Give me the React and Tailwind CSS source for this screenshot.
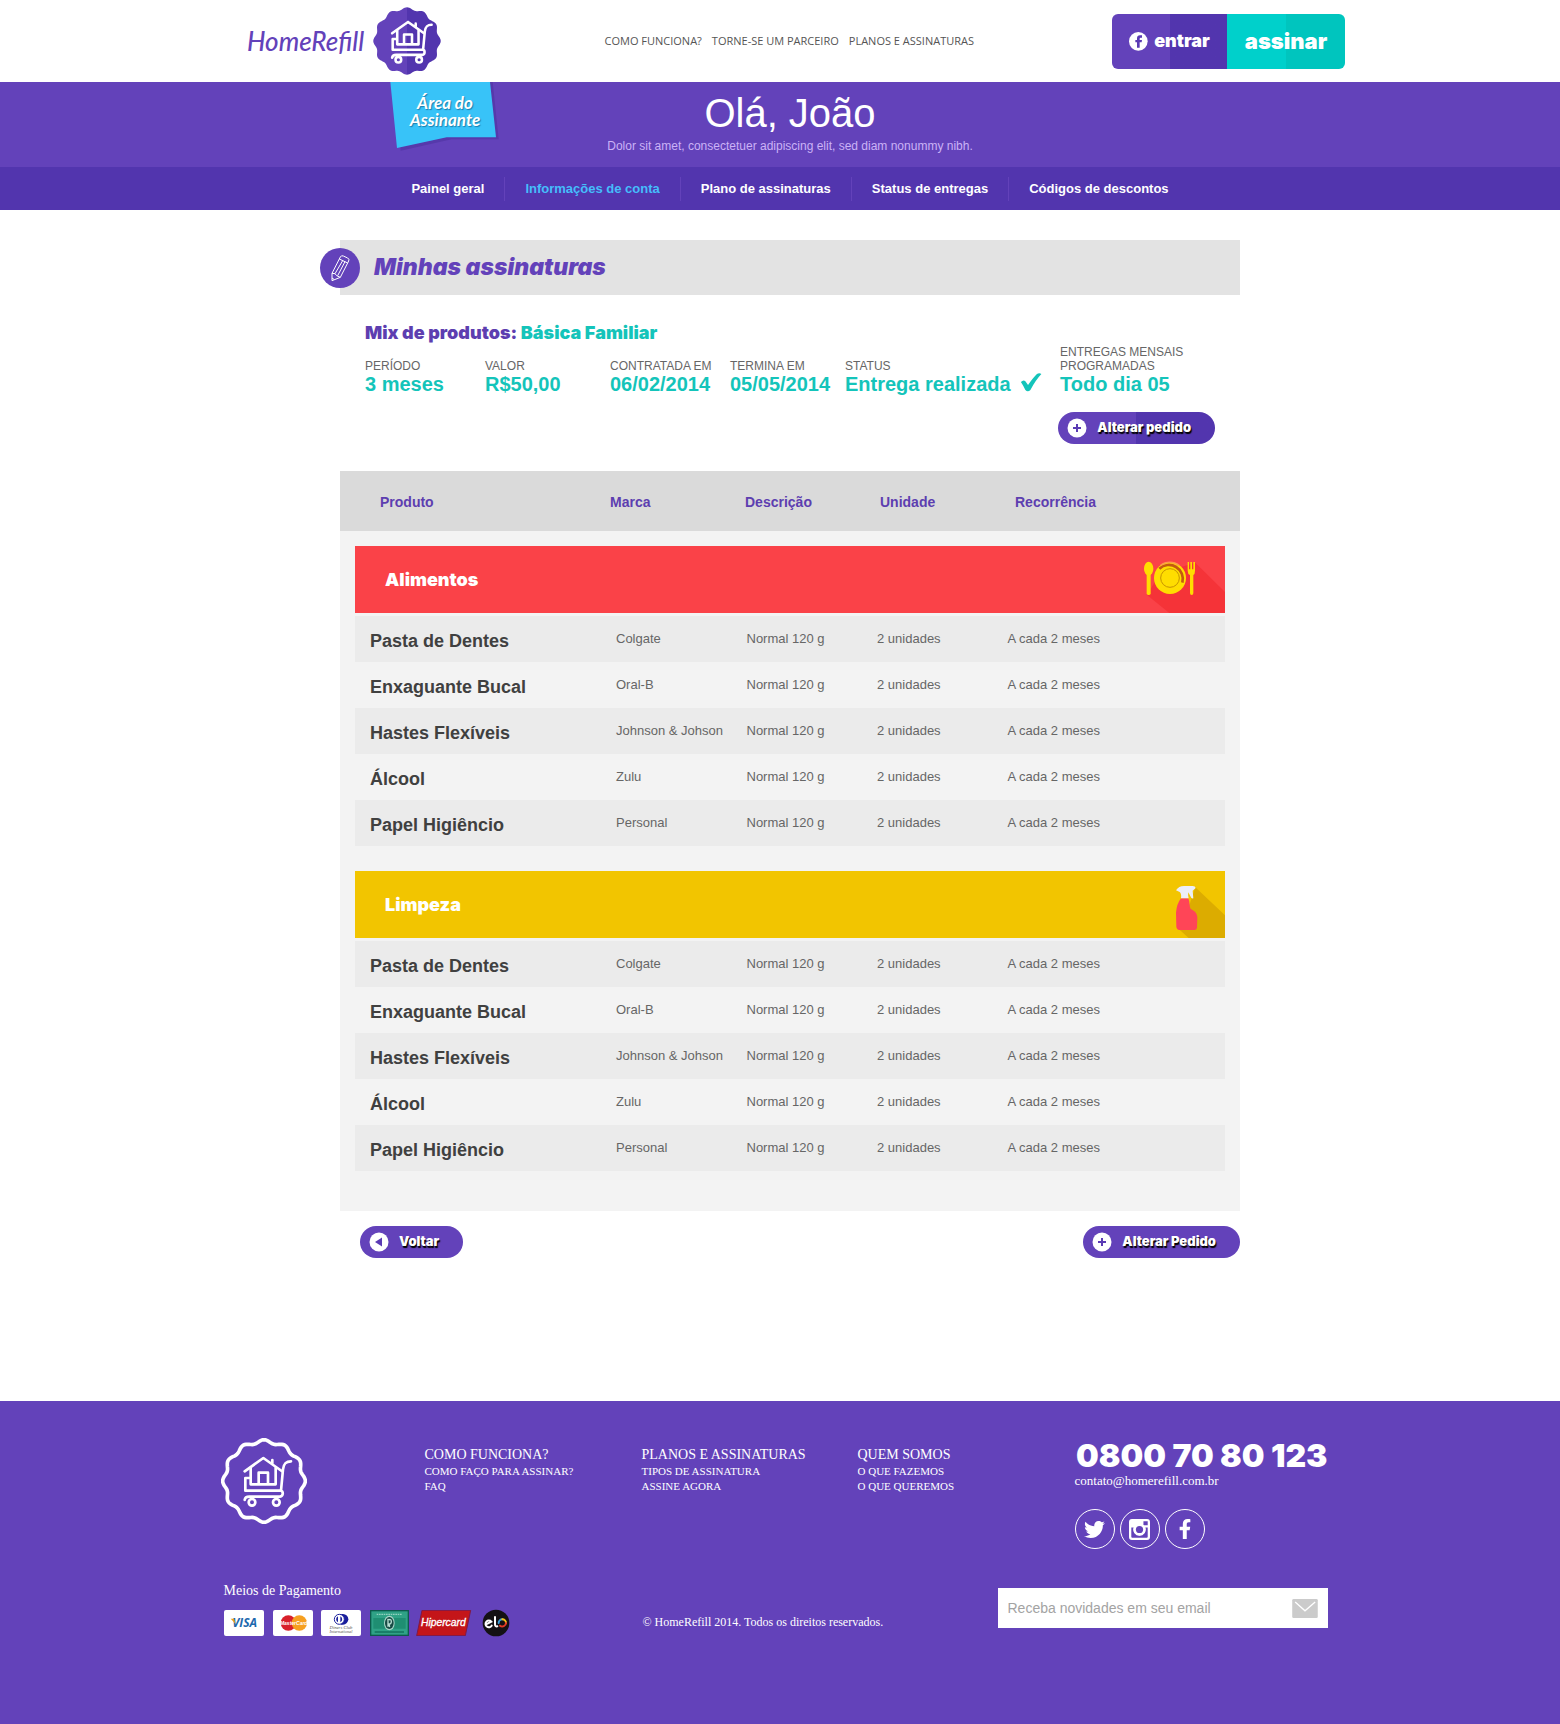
import React from "react";
import { FaTwitter, FaFacebookF } from "react-icons/fa";

const black = "font-['Inter','Liberation_Sans',sans-serif] font-black";

const topLinks = ["COMO FUNCIONA?", "TORNE-SE UM PARCEIRO", "PLANOS E ASSINATURAS"];

const accountLinks = [
  "Painel geral",
  "Informações de conta",
  "Plano de assinaturas",
  "Status de entregas",
  "Códigos de descontos",
];

const details = [
  { label: "PERÍODO", value: "3 meses" },
  { label: "VALOR", value: "R$50,00" },
  { label: "CONTRATADA EM", value: "06/02/2014" },
  { label: "TERMINA EM", value: "05/05/2014" },
  { label: "STATUS", value: "Entrega realizada", done: true },
  { label: "ENTREGAS MENSAIS PROGRAMADAS", value: "Todo dia 05" },
];

const products = [
  ["Pasta de Dentes", "Colgate"],
  ["Enxaguante Bucal", "Oral-B"],
  ["Hastes Flexíveis", "Johnson & Johson"],
  ["Álcool", "Zulu"],
  ["Papel Higiêncio", "Personal"],
];

const footerColumns = [
  { title: "COMO FUNCIONA?", links: ["COMO FAÇO PARA ASSINAR?", "FAQ"] },
  { title: "PLANOS E ASSINATURAS", links: ["TIPOS DE ASSINATURA", "ASSINE AGORA"] },
  { title: "QUEM SOMOS", links: ["O QUE FAZEMOS", "O QUE QUEREMOS"] },
];

function scallop(radius, depth) {
  const points = [];
  for (let i = 0; i < 180; i += 1) {
    const t = (i / 180) * Math.PI * 2;
    const r = radius + depth * Math.cos(12 * t);
    points.push(`${(Math.sin(t) * r).toFixed(1)} ${(-Math.cos(t) * r).toFixed(1)}`);
  }
  return `M${points.join("L")}Z`;
}

function HouseCart({ strokeWidth }) {
  return (
    <g
      transform="translate(-162 -183)"
      fill="none"
      stroke="#fff"
      strokeWidth={strokeWidth}
      strokeLinecap="round"
      strokeLinejoin="round"
    >
      <path d="M104 154 160 114 215 153M187 120v12" />
      <path d="M122 144v49h75v-49M146 193v-35h28v35" />
      <path d="M118 174h-12v38h107M243 124c-17 0-22 8-24 24l-6 64c7 2 8 16-3 18h-92c-8 0-13 3-14 10" />
      <circle cx="126" cy="247" r="10" />
      <circle cx="199" cy="247" r="10" />
    </g>
  );
}

function HeaderBadge() {
  return (
    <svg viewBox="-128 -128 256 256" className="size-[68px]" aria-hidden="true">
      <defs>
        <linearGradient id="badge" x1="0" x2="1" y1="0" y2="0">
          <stop offset="50%" stopColor="#6342ba" />
          <stop offset="50%" stopColor="#5235ae" />
        </linearGradient>
      </defs>
      <path d={scallop(122, 5)} fill="url(#badge)" />
      <g transform="translate(6 2) scale(1.07)">
        <HouseCart strokeWidth="9" />
      </g>
    </svg>
  );
}

function FooterBadge() {
  return (
    <svg viewBox="-129 -129 258 258" className="size-[86px]" aria-hidden="true">
      <path d={scallop(119, 5)} fill="none" stroke="#fff" strokeWidth="11" />
      <HouseCart strokeWidth="8" />
    </svg>
  );
}

function Ribbon() {
  return (
    <div className="absolute top-0 left-[50px] h-[70px] w-[110px]">
      <svg viewBox="0 0 330 210" className="h-full w-full" aria-hidden="true">
        <path d="M10 0H308L326 172H185L32 206Z" fill="#4a2f9c" opacity=".5" />
        <path d="M1 0H300L318 166H170L21 198Z" fill="#38c3f8" />
      </svg>
      <div className="absolute inset-x-0 top-3 text-center font-['Lato','Liberation_Sans',sans-serif] text-[17px] leading-[17px] font-bold text-white italic [text-shadow:1px_1px_1px_#1b7fae]">
        Área do
        <br />
        Assinante
      </div>
    </div>
  );
}

function PencilIcon() {
  return (
    <svg viewBox="30 51 120 120" className="size-10 shrink-0" aria-hidden="true">
      <circle cx="90" cy="111" r="60" fill="#6342ba" />
      <g fill="none" stroke="#fff" strokeWidth="3" strokeLinejoin="round">
        <path d="M66 127 91 78q3-6 9-3l13 6q6 3 3 9L91 139 66 149Z" />
        <path d="M88 84l25 12M66 127l9 1 5 6 11 5M75 128 98 89M83 134l22-42M66 141l6 4" />
      </g>
    </svg>
  );
}

function FoodIcon() {
  return (
    <svg viewBox="414 48 261 201" className="h-[67px] w-[87px]" aria-hidden="true">
      <path d="M586 98 675 186V249H508L441 195 480 130Z" fill="#f53338" />
      <g fill="#fd0">
        <ellipse cx="446" cy="116" rx="14" ry="21" />
        <rect x="440" y="128" width="12" height="67" rx="5" />
        <circle cx="510" cy="144" r="48" />
        <path d="M563 96h4v22h4V96h5v22h4V96h5v26q0 10-5 13v54q0 6-5 6t-5-6v-54q-7-3-7-13Z" />
      </g>
      <path d="M478 116a42 42 0 0 1 69 42" fill="none" stroke="#c45a10" strokeWidth="8" />
      <path d="M482 106a46 46 0 0 1 55 0" fill="none" stroke="#fb9a4a" strokeWidth="5" />
      <circle cx="510" cy="144" r="28" fill="none" stroke="#c79200" strokeWidth="3" />
    </svg>
  );
}

function SprayIcon() {
  return (
    <svg viewBox="339 33 156 201" className="h-[67px] w-[52px]" aria-hidden="true">
      <path d="M406 82 495 166V234H386L352 203 390 130Z" fill="#dcac00" />
      <path d="M363 115h22c5 12 2 22 7 32 13 6 20 14 20 26l-1 30q-1 7-8 7h-45q-8-1-9-10l-1-42q2-26 15-43Z" fill="#ff4557" />
      <path d="M348 91q8-13 24-13h26q8 0 9 6l-9 8 2 23q-6 2-8-5l-7-13q-2 8 1 18h-23q2-14-4-19Z" fill="#eceef8" />
    </svg>
  );
}

function FacebookDisc() {
  return (
    <svg viewBox="0 0 57 57" className="size-[19px] shrink-0" aria-hidden="true">
      <circle cx="28" cy="28" r="28" fill="#fff" />
      <path d="M24 47V31h-5v-7h5v-5q0-9 9-9h6v7h-4q-3 0-3 3v4h7l-1 7h-6v16Z" fill="#5a3ab4" />
    </svg>
  );
}

function CircleIcon({ kind }) {
  return (
    <svg viewBox="0 0 20 20" className="size-5 shrink-0" aria-hidden="true">
      <circle cx="10" cy="10" r="9.5" fill="#fff" />
      {kind === "plus" ? (
        <path d="M10 6v8M6 10h8" stroke="#5a3ab4" strokeWidth="2" />
      ) : (
        <path d="M13 5.5v9L6 10Z" fill="#5a3ab4" />
      )}
    </svg>
  );
}

function PillButton({ kind = "plus", split, children }) {
  return (
    <button
      type="button"
      className={`flex h-8 items-center gap-2.5 rounded-full pr-6 pl-[9px] text-[13px] whitespace-nowrap text-white [text-shadow:1px_2px_1px_#000] ${black} ${
        split ? "bg-linear-to-r from-[#6342ba] from-50% to-[#5235ae] to-50%" : "bg-[#6342ba]"
      }`}
    >
      <CircleIcon kind={kind} />
      {children}
    </button>
  );
}

function Category({ title, color, icon }) {
  return (
    <section>
      <header className={`mb-[3px] flex items-center justify-between pl-[30px] ${color}`}>
        <h3 className={`text-lg text-white ${black}`}>{title}</h3>
        {icon}
      </header>
      <table className="w-full table-fixed text-left text-[13px] text-[#666]">
        <colgroup>
          <col className="w-[30%]" />
          <col className="w-[15%]" />
          <col className="w-[15%]" />
          <col className="w-[15%]" />
          <col className="w-[25%]" />
        </colgroup>
        <tbody>
          {products.map(([name, brand]) => (
            <tr key={name} className="h-[46px] whitespace-nowrap odd:bg-[#ebebeb]">
              <th scope="row" className="pt-1 pl-[15px] text-lg font-bold text-[#404040]">
                {name}
              </th>
              <td>{brand}</td>
              <td>Normal 120 g</td>
              <td>2 unidades</td>
              <td>A cada 2 meses</td>
            </tr>
          ))}
        </tbody>
      </table>
    </section>
  );
}

function PaymentCards() {
  return (
    <div className="mt-[9px] flex items-center">
      <svg viewBox="0 0 120 78" className="h-[26px] w-10" role="img" aria-label="Visa">
        <rect width="120" height="78" rx="6" fill="#fff" />
        <text x="62" y="52" textAnchor="middle" fontFamily="Open Sans" fontWeight="700" fontStyle="italic" fontSize="36" fill="#1d68ad">VISA</text>
        <path d="M20 26h10l5 16Z" fill="#eba21a" />
      </svg>
      <svg viewBox="0 0 120 78" className="ml-[9px] h-[26px] w-10" role="img" aria-label="MasterCard">
        <rect width="120" height="78" rx="6" fill="#fff" />
        <circle cx="46" cy="39" r="23" fill="#d8202a" />
        <circle cx="79" cy="39" r="23" fill="#f6a020" />
        <text x="62" y="45" textAnchor="middle" fontFamily="Liberation Sans" fontWeight="700" fontStyle="italic" fontSize="15" fill="#fff">MasterCard</text>
      </svg>
      <svg viewBox="0 0 120 78" className="ml-2 h-[26px] w-10" role="img" aria-label="Diners Club International">
        <rect width="120" height="78" rx="6" fill="#fff" />
        <path d="M60 12h6a16 16 0 0 1 0 32H60Z" fill="#1a1f9c" />
        <circle cx="55" cy="28" r="15" fill="#fff" stroke="#1a1f9c" strokeWidth="3" />
        <path d="M51 19a10 10 0 0 0 0 18ZM58 19a10 10 0 0 1 0 18Z" fill="#1a1f9c" />
        <text x="60" y="57" textAnchor="middle" fontFamily="Liberation Serif" fontStyle="italic" fontSize="14" fill="#555">Diners Club</text>
        <text x="60" y="69" textAnchor="middle" fontFamily="Liberation Serif" fontStyle="italic" fontSize="13" fill="#555">International</text>
      </svg>
      <svg viewBox="0 0 117 78" className="ml-[9px] h-[26px] w-[39px]" role="img" aria-label="American Express">
        <rect width="117" height="78" fill="#0c5b4c" />
        <rect x="4" y="4" width="109" height="70" fill="#2fa286" />
        <path d="M20 13h76" stroke="#8fd0bd" strokeWidth="4" strokeDasharray="5 2" />
        <path d="M10 24h97v32H10Z" fill="#1f8e72" />
        <ellipse cx="58" cy="39" rx="16" ry="22" fill="#a9d5c8" />
        <ellipse cx="58" cy="39" rx="13" ry="18" fill="#174a44" />
        <path d="M52 31q12-6 12 3t-7 8l2 9M54 26v24" stroke="#b9dfd3" strokeWidth="4" fill="none" />
        <path d="M14 66h88" stroke="#0f6d59" strokeWidth="4" />
      </svg>
      <svg viewBox="0 0 168 78" className="ml-[7px] h-[26px] w-14" role="img" aria-label="Hipercard">
        <path d="M18 1H164L148 77H2Z" fill="#c41519" stroke="#7e1a48" strokeWidth="3" />
        <text x="82" y="49" textAnchor="middle" fontFamily="Liberation Sans" fontStyle="italic" fontSize="31" fill="#fff" stroke="#fff">Hipercard</text>
      </svg>
      <svg viewBox="0 0 84 84" className="ml-2.5 size-7" role="img" aria-label="Elo">
        <circle cx="42" cy="42" r="40" fill="#141114" />
        <g fill="none" strokeWidth="6" strokeLinecap="round">
          <path d="M12 46 28 38A10 10 0 1 0 29 50M39 24V46q0 7 7 6" stroke="#fff" />
          <path d="M50 42a11 11 0 0 1 11-11" stroke="#3aa0dc" />
          <path d="M61 31a11 11 0 0 1 11 11" stroke="#f5c518" />
          <path d="M72 42a11 11 0 0 1-18 8" stroke="#e23a25" />
        </g>
      </svg>
    </div>
  );
}

function InstagramIcon() {
  return (
    <svg viewBox="0 0 64 64" className="size-[21px]" aria-hidden="true">
      <path
        fill="#fff"
        fillRule="evenodd"
        d="M9 0h46q9 0 9 9v46q0 9-9 9H9q-9 0-9-9V9Q0 0 9 0ZM44 7v12h13V7ZM7 26v28q0 3 3 3h44q3 0 3-3V26h-7a19 19 0 1 1-36 0Z"
      />
      <circle cx="32" cy="32" r="15" fill="none" stroke="#fff" strokeWidth="6" />
      <circle cx="32" cy="32" r="11" fill="#6342ba" />
    </svg>
  );
}

export default function App() {
  return (
    <div className="bg-white font-['Liberation_Sans',Arial,sans-serif]">
      <header className="pl-8">
        <div className="mx-auto flex h-[82px] max-w-[1098px] items-center">
          <a href="#" className="flex items-center gap-[9px]">
            <span className="w-[117px] font-['Lato','Liberation_Sans',sans-serif] text-[26px] leading-8 font-medium text-[#6342ba] italic">
              HomeRefill
            </span>
            <HeaderBadge />
          </a>
          <nav className="mr-[138px] ml-auto flex gap-2.5 font-['Open_Sans','Liberation_Sans',sans-serif] text-[11px] whitespace-nowrap text-[#555]">
            {topLinks.map((text) => (
              <a key={text} href="#">
                {text}
              </a>
            ))}
          </nav>
          <div className={`flex h-[55px] overflow-hidden rounded-md text-white ${black}`}>
            <button
              type="button"
              className="flex w-[115px] items-center justify-center gap-1.5 bg-linear-to-r from-[#6342ba] from-50% to-[#5235ae] to-50% text-lg"
            >
              <FacebookDisc />
              entrar
            </button>
            <button
              type="button"
              className="w-[118px] bg-linear-to-r from-[#00d0cb] from-50% to-[#00c5be] to-50% text-[22px]"
            >
              assinar
            </button>
          </div>
        </div>
      </header>

      <div className="bg-[#6342ba] pl-5">
        <div className="relative mx-auto h-[85px] max-w-[900px] pt-2 text-center">
          <Ribbon />
          <h1 className="text-[40px] leading-[46px] text-white">Olá, João</h1>
          <p className="mt-0.5 text-[12px] leading-4 text-[#cbb2f7]">
            Dolor sit amet, consectetuer adipiscing elit, sed diam nonummy nibh.
          </p>
        </div>
      </div>
      <nav className="bg-[#5235ae] pl-5">
        <ul className="flex h-[43px] items-center justify-center divide-x divide-[#6342ba] text-[13px] font-bold whitespace-nowrap text-white">
          {accountLinks.map((text) => (
            <li key={text} className="px-5 leading-6">
              <a href="#" className={text === "Informações de conta" ? "text-[#45bdfb]" : ""}>
                {text}
              </a>
            </li>
          ))}
        </ul>
      </nav>

      <main className="pt-[30px] pb-[143px] pl-5">
        <div className="mx-auto max-w-[900px]">
          <div className="flex h-[55px] items-center gap-3.5 bg-[#e3e3e3]">
            <div className="-ml-5">
              <PencilIcon />
            </div>
            <h2 className={`text-[23px] text-[#6342ba] italic ${black}`}>Minhas assinaturas</h2>
          </div>

          <section className="pt-[26px] pl-[25px]">
            <h3 className={`text-lg leading-6 text-[#5d3eb0] ${black}`}>
              Mix de produtos: <span className="text-[#14c4ba]">Básica Familiar</span>
            </h3>
            <dl className="grid grid-cols-[120fr_125fr_120fr_115fr_215fr_180fr] items-end">
              {details.map((item) => (
                <div key={item.label}>
                  <dt className="max-w-[140px] text-[12px] leading-[14px] text-[#666]">{item.label}</dt>
                  <dd className="flex items-center gap-2 text-xl leading-[23px] font-bold whitespace-nowrap text-[#14c4ba]">
                    {item.value}
                    {item.done && (
                      <svg viewBox="0 0 72 64" className="mb-1 h-[19px] w-6" aria-hidden="true">
                        <path d="M2 30q9-9 15-2l9 12Q44 14 56 3q8-4 15 0Q51 24 34 57q-9 9-17 0Q10 42 2 30Z" fill="#14c4ba" />
                      </svg>
                    )}
                  </dd>
                </div>
              ))}
            </dl>
            <div className="mt-4 mr-[25px] flex justify-end">
              <PillButton split>Alterar pedido</PillButton>
            </div>
          </section>

          <section className="mt-[27px] bg-[#f3f3f3] pb-10">
            <table className="w-full table-fixed bg-[#dadada] text-left text-sm text-[#5d3eb0]">
              <thead>
                <tr className="h-[60px]">
                  <th scope="col" className="w-[30%] pt-0.5 pl-10">Produto</th>
                  <th scope="col" className="w-[15%] pt-0.5">Marca</th>
                  <th scope="col" className="w-[15%] pt-0.5">Descrição</th>
                  <th scope="col" className="w-[15%] pt-0.5">Unidade</th>
                  <th scope="col" className="w-[25%] pt-0.5">Recorrência</th>
                </tr>
              </thead>
            </table>
            <div className="flex flex-col gap-[25px] px-[15px] pt-[15px]">
              <Category title="Alimentos" color="bg-[#fa4248]" icon={<FoodIcon />} />
              <Category title="Limpeza" color="bg-[#f2c500]" icon={<SprayIcon />} />
            </div>
          </section>

          <div className="mt-[15px] ml-5 flex justify-between">
            <PillButton kind="back">Voltar</PillButton>
            <PillButton>Alterar Pedido</PillButton>
          </div>
        </div>
      </main>

      <footer className="bg-[#6342ba] pt-[37px] pr-3 pb-[87px] font-['Liberation_Serif','Times_New_Roman',serif] text-white">
        <div className="mx-auto max-w-[1107px]">
          <div className="grid grid-cols-[204fr_217fr_216fr_217fr_253fr]">
            <FooterBadge />
            {footerColumns.map((column) => (
              <nav key={column.title} className="pt-2">
                <a href="#" className="block text-sm leading-[18px]">{column.title}</a>
                {column.links.map((link) => (
                  <a key={link} href="#" className="block text-[11px] leading-[15px]">{link}</a>
                ))}
              </nav>
            ))}
            <div>
              <p className={`text-right text-[32px] leading-[35px] whitespace-nowrap ${black}`}>0800 70 80 123</p>
              <a href="#" className="block text-[13px] leading-[15px]">contato@homerefill.com.br</a>
              <div className="mt-[21px] flex gap-[5px]">
                <a href="#" aria-label="Twitter" className="flex size-10 items-center justify-center rounded-full border border-white">
                  <FaTwitter className="size-[21px]" />
                </a>
                <a href="#" aria-label="Instagram" className="flex size-10 items-center justify-center rounded-full border border-white">
                  <InstagramIcon />
                </a>
                <a href="#" aria-label="Facebook" className="flex size-10 items-center justify-center rounded-full border border-white">
                  <FaFacebookF className="size-5" />
                </a>
              </div>
            </div>
          </div>

          <div className="mt-[33px] flex items-start">
            <div className="w-[422px] pl-[3px]">
              <p className="text-sm leading-[18px]">Meios de Pagamento</p>
              <PaymentCards />
            </div>
            <p className="mt-8 text-[12px] leading-4">© HomeRefill 2014. Todos os direitos reservados.</p>
            <form className="mt-1.5 ml-auto flex h-10 w-[330px] items-center bg-white px-2.5 font-['Liberation_Sans',Arial,sans-serif]">
              <input
                type="email"
                aria-label="Receba novidades em seu email"
                placeholder="Receba novidades em seu email"
                className="min-w-0 flex-1 text-sm text-[#555] outline-none placeholder:text-[#a3a3a3]"
              />
              <button type="button" aria-label="Enviar">
                <svg viewBox="0 0 78 58" className="h-[19px] w-[26px]" aria-hidden="true">
                  <rect width="78" height="58" rx="4" fill="#cbcbcb" />
                  <path d="M9 9 39 36 70 9" fill="none" stroke="#fff" strokeWidth="4" />
                </svg>
              </button>
            </form>
          </div>
        </div>
      </footer>
    </div>
  );
}
